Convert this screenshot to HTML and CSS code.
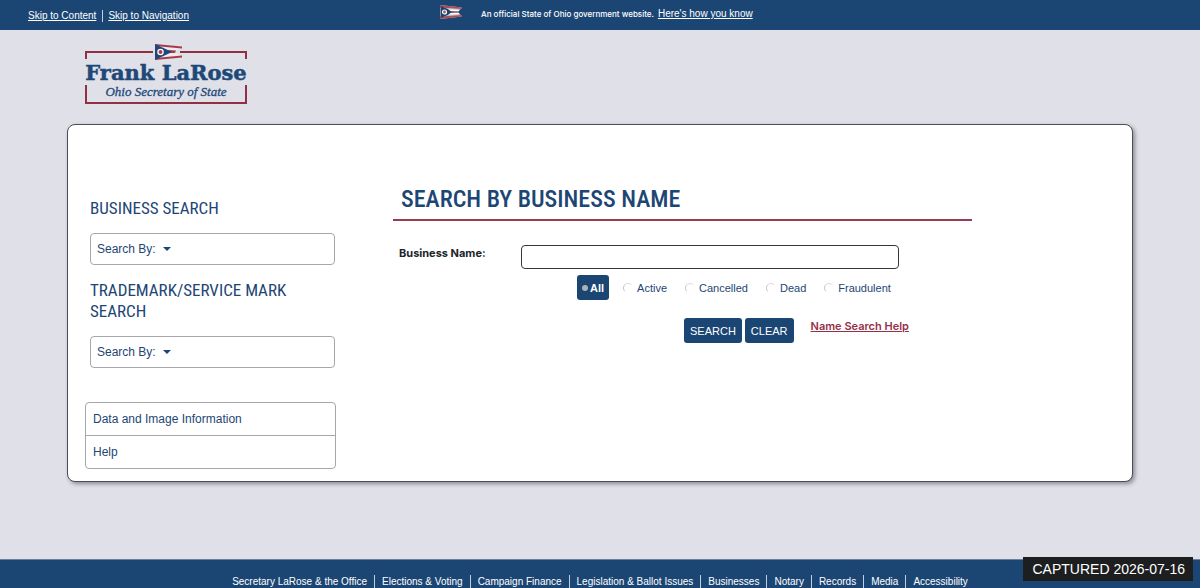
FILE: index.html
```html
<!DOCTYPE html>
<html lang="en">
<head>
<meta charset="utf-8">
<title>Business Search - Ohio Secretary of State</title>
<link rel="stylesheet" href="styles.css">
</head>
<body>
<header>
  <div class="topbar">
    <nav class="skips" aria-label="Skip links">
      <a href="#content">Skip to Content</a>
      <a href="#navigation">Skip to Navigation</a>
    </nav>
    <div class="official">
      <svg class="flag" viewBox="0 0 22 14" aria-hidden="true">
        <path d="M0 0L22 2.500L18 7L22 11.500L0 14Z" fill="#c9c3cf"/>
        <path d="M0 0L22 2.500V4L0 2.500ZM0 11.500L22 10L22 11.500L0 14Z" fill="#a75058"/>
        <path d="M0.600 1L15 7L0.600 13Z" fill="#1c426f"/>
        <path d="M8 4.300L19.500 5L18 6.200H11ZM11 7.800H18L19.500 9L8 9.800Z" fill="#fff"/>
        <path d="M12 6.300H18V7.700H12Z" fill="#a75058"/>
        <circle cx="4.500" cy="7" r="2" fill="#a75058" stroke="#fff" stroke-width="1.200"/>
      </svg>
      <span>An official State of Ohio government website.</span>
      <a href="#official">Here's how you know</a>
    </div>
  </div>
  <a class="brand" href="#home" aria-label="Frank LaRose, Ohio Secretary of State">
    <svg class="logo" viewBox="0 0 162 60">
      <path d="M1 15V8H68M95 8H161V15M1 41V59H161V41" fill="none" stroke="#922f43" stroke-width="2"/>
      <path d="M70 0L97 3L90 8L97 13L70 16Z" fill="#ece9ef"/>
      <path d="M70 0L97 2.500V4.500L70 2ZM83 6L91 6.500L90 9L83 9ZM70 14L97 11.500V13.500L70 16Z" fill="#a83a49"/>
      <path d="M70 0L87 8L70 16Z" fill="#1e4877"/>
      <circle cx="75.500" cy="8" r="2.600" fill="#a83a49" stroke="#fff" stroke-width="1.300"/>
      <text class="logo-name" x="81" y="36" text-anchor="middle">Frank LaRose</text>
      <text class="logo-role" x="81" y="52" text-anchor="middle">Ohio Secretary of State</text>
    </svg>
  </a>
</header>
<main class="card" id="content">
  <aside class="sidebar" id="navigation">
    <section class="group">
      <h2>Business Search</h2>
      <button class="dropdown" type="button">Search By:<span class="caret"></span></button>
    </section>
    <section class="group">
      <h2>Trademark/Service Mark Search</h2>
      <button class="dropdown" type="button">Search By:<span class="caret"></span></button>
    </section>
    <nav class="list" aria-label="Resources">
      <a href="#data">Data and Image Information</a>
      <a href="#help">Help</a>
    </nav>
  </aside>
  <form class="search">
    <h1>Search by Business Name</h1>
    <div class="field">
      <label for="name">Business Name:</label>
      <input id="name" type="text">
    </div>
    <div class="statuses" role="radiogroup" aria-label="Status">
      <label><input type="radio" name="status" checked>All</label>
      <label><input type="radio" name="status">Active</label>
      <label><input type="radio" name="status">Cancelled</label>
      <label><input type="radio" name="status">Dead</label>
      <label><input type="radio" name="status">Fraudulent</label>
    </div>
    <div class="actions">
      <button type="submit">SEARCH</button>
      <button type="reset">CLEAR</button>
      <a href="#name-help">Name Search Help</a>
    </div>
  </form>
</main>
<footer>
  <nav class="footer-links" aria-label="Footer">
    <a href="#office">Secretary LaRose &amp; the Office</a>
    <a href="#elections">Elections &amp; Voting</a>
    <a href="#campaign">Campaign Finance</a>
    <a href="#legislation">Legislation &amp; Ballot Issues</a>
    <a href="#businesses">Businesses</a>
    <a href="#notary">Notary</a>
    <a href="#records">Records</a>
    <a href="#media">Media</a>
    <a href="#accessibility">Accessibility</a>
  </nav>
</footer>
<div class="stamp">CAPTURED 2026-07-16</div>
</body>
</html>
```
FILE: styles.css
```css
* { box-sizing: border-box; }
body {
  margin: 0;
  min-height: 100vh;
  display: flex;
  flex-direction: column;
  background: #e0e0e9;
  color: #1d4675;
  font-family: "Liberation Sans", Arial, sans-serif;
  font-size: 12px;
}
a { color: inherit; }
.topbar {
  display: grid;
  grid-template-columns: 440px 1fr;
  height: 30px;
  background: #1b4674;
  color: #fff;
  font-size: 10px;
  line-height: 12px;
}
.skips { display: flex; align-items: center; padding: 1px 0 0 28px; }
.skips a + a { margin-left: 6px; padding-left: 5px; border-left: 1px solid #c3cfdd; }
.official { display: flex; align-items: center; padding-bottom: 2px; }
.official span { margin: 0 4px 0 19px; font: 500 8px/12px Inter, sans-serif; }
.flag { width: 22px; height: 14px; margin-bottom: 4px; }
.brand { display: block; width: 162px; margin: 14px 0 20px 85px; }
.logo { display: block; width: 100%; overflow: visible; }
.logo-name { font: bold 21px "DejaVu Serif", serif; fill: #1e4877; stroke: #1e4877; stroke-width: 0.5px; }
.logo-role { font: italic 13px "Liberation Serif", serif; fill: #1e4877; stroke: #1e4877; stroke-width: 0.3px; }
.card {
  display: grid;
  grid-template-columns: 251px minmax(0, 579px);
  column-gap: 57px;
  margin: 0 67px;
  padding: 73px 17px 12px;
  background: #fff;
  border: 1px solid #4a4e56;
  border-radius: 8px;
  box-shadow: 2px 2px 4px #8b8b92;
}
.group { padding: 0 1px 0 5px; margin-bottom: 15px; }
h1, h2 {
  margin: 0;
  font-family: "Roboto Condensed", "Liberation Sans Narrow", Roboto, sans-serif;
  font-weight: 400;
  text-transform: uppercase;
}
h2 { margin-bottom: 14px; font-size: 17px; line-height: 21px; }
.dropdown {
  display: flex;
  align-items: center;
  gap: 7px;
  width: 100%;
  height: 32px;
  padding: 0 6px;
  background: #fff;
  border: 1px solid #a5a7aa;
  border-radius: 4px;
  color: inherit;
  font: inherit;
}
.caret { border: 4px solid transparent; border-top-color: currentColor; border-bottom: 0; }
.list {
  margin-top: 34px;
  border: 1px solid #a5a7aa;
  border-radius: 4px;
}
.list a { display: block; padding: 0 7px; line-height: 32px; text-decoration: none; }
.list a + a { border-top: 1px solid #a5a7aa; }
.search { margin-top: -13px; }
h1 {
  padding: 0 8px 5px;
  border-bottom: 2px solid #963c52;
  font-size: 24px;
  font-weight: 500;
  line-height: 29px;
}
.field { display: grid; grid-template-columns: 122px 378px; margin-top: 24px; padding-left: 6px; }
.field label { color: #20242a; font: 700 11px/16px Inter, sans-serif; }
.field input {
  height: 24px;
  padding: 0 6px;
  border: 1px solid #34373e;
  border-radius: 4px;
  font: inherit;
}
.statuses { display: flex; gap: 10px; margin: 6px 0 0 184px; font-size: 11px; }
.statuses label { display: flex; align-items: center; gap: 4px; height: 25px; padding: 0 4px; border-radius: 3px; }
.statuses input {
  appearance: none;
  width: 10px;
  height: 10px;
  margin: 0;
  border-radius: 50%;
  border: 1px solid transparent;
  border-left-color: #c6c7ca;
  border-top-color: #dddde0;
}
.statuses label:has(:checked) { gap: 2px; padding: 0 5px; background: #1b4674; color: #fff; font-weight: 700; }
.statuses input:checked { width: 6px; height: 6px; border: 0; background: #aeb2b6; }
.actions { display: flex; gap: 3px; margin: 18px 0 0 291px; }
.actions button {
  height: 25px;
  padding: 0 6px;
  border: 0;
  border-radius: 3px;
  background: #1b4674;
  color: #fff;
  font: 11px "Liberation Sans", Arial, sans-serif;
}
.actions a { margin-left: 14px; color: #96304a; font: 600 11px/16px Inter, sans-serif; }
footer { margin-top: auto; padding-top: 15px; background: #1b4674; color: #fff; border-top: 1px solid #68819f; }
.footer-links { display: flex; justify-content: center; font-size: 10px; line-height: 13px; }
.footer-links a { padding: 0 7px; text-decoration: none; }
.footer-links a + a { border-left: 1px solid #c3cfdd; }
.stamp {
  position: fixed;
  right: 7px;
  bottom: 7px;
  padding: 0 8px 0 9px;
  background: #1d1e20;
  color: #fff;
  font-size: 14px;
  line-height: 24px;
}
```
